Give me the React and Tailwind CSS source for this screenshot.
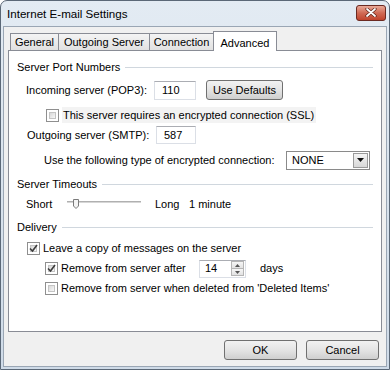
import React from 'react';

const font = { fontFamily: '"Liberation Sans", Arial, sans-serif' };

const Checkbox = ({ checked }) => (
  <div className="w-[13px] h-[13px] border border-[#8f8f8f] bg-white p-[2px] shrink-0">
    <div className="w-full h-full border border-[#c4c4c4] bg-linear-to-br from-[#d8d8d8] to-[#f8f8f8] flex items-center justify-center">
      {checked && (
        <svg width="9" height="9" viewBox="0 0 9 9" className="-m-[2px]">
          <path d="M1 4.5 L3.5 7 L8 1" fill="none" stroke="#3c3c3c" strokeWidth="1.6" />
        </svg>
      )}
    </div>
  </div>
);

const GroupHeader = ({ children }) => (
  <div className="flex items-center h-[16px] gap-[5px] whitespace-nowrap">
    <span>{children}</span>
    <div className="flex-1 h-px bg-[#d0d7de]" />
  </div>
);

const Button = ({ children, className = '' }) => (
  <div
    className={`h-[20px] rounded-[3px] border border-[#707070] flex items-center justify-center shrink-0 bg-linear-to-b from-[#f2f2f2] via-[#e4e4e4] to-[#cfcfcf] ${className}`}
  >
    {children}
  </div>
);

const TextBox = ({ value, className = '' }) => (
  <div
    className={`bg-white border border-[#dbdfe6] border-t-[#abadb3] flex items-center pl-[7px] shrink-0 ${className}`}
  >
    {value}
  </div>
);

const Tab = ({ label, className = '' }) => (
  <div
    className={`h-[17px] border border-b-0 border-[#898c95] bg-linear-to-b from-[#f4f4f4] to-[#e1e1e1] flex items-center justify-center whitespace-nowrap ${className}`}
  >
    {label}
  </div>
);

export default function App() {
  return (
    <div className="w-[392px] h-[372px] bg-white text-[11px] text-black" style={font}>
      <div className="w-[390px] h-[370px] rounded-t-[7px] border border-[#5b6877] bg-linear-to-b from-[#e3ebf3] to-[#cfdbe8] flex flex-col">
        {/* Title bar */}
        <div className="h-[25px] flex items-center justify-between pl-[6px] pr-[3px]">
          <span className="text-[11.6px] mt-[1px]">Internet E-mail Settings</span>
          <div className="w-[30px] h-[16px] mb-[2px] rounded-[3px] border border-[#6b2a22] bg-[#c75a45] bg-linear-to-b from-[#e9a998] via-[#d06a55] to-[#c0432c] flex items-center justify-center">
            <svg width="12" height="9" viewBox="0 0 12 9">
              <path d="M2 1 L10 8 M10 1 L2 8" stroke="#5a2016" strokeWidth="3.2" strokeLinecap="round" />
              <path d="M2 1 L10 8 M10 1 L2 8" stroke="#fff" strokeWidth="1.8" strokeLinecap="round" />
            </svg>
          </div>
        </div>

        {/* Client area */}
        <div className="flex-1 mx-[2px] mb-[2px] border border-[#9aa6b4] bg-[#f0f0f0] pt-[4px] px-[4px] flex flex-col">
          {/* Tabs */}
          <div className="h-[19px] flex items-end pl-[2px]">
            <Tab label="General" className="w-[49px]" />
            <Tab label="Outgoing Server" className="w-[92px] -ml-px" />
            <Tab label="Connection" className="w-[65px] -ml-px" />
            <div className="w-[64px] h-[20px] -ml-px -mb-px relative z-10 border border-b-0 border-[#898c95] bg-white flex items-start justify-center pt-[3px]">
              Advanced
            </div>
          </div>

          {/* Panel */}
          <div className="h-[282px] border border-[#898c95] bg-white px-[8px] pt-[8px] flex flex-col whitespace-nowrap">
            <GroupHeader>Server Port Numbers</GroupHeader>

            <div className="h-[20px] mt-[5px] flex items-center pl-[9px]">
              <span className="w-[128px] shrink-0">Incoming server (POP3):</span>
              <TextBox value="110" className="w-[42px] h-[19px]" />
              <Button className="w-[77px] ml-[10px]">Use Defaults</Button>
            </div>

            <div className="h-[16px] mt-[7px] flex items-center pl-[29px] gap-[3px]">
              <Checkbox />
              <span className="bg-[#f3f3f3] pl-[1px] pr-[2px]">This server requires an encrypted connection (SSL)</span>
            </div>

            <div className="h-[20px] mt-[2px] flex items-center pl-[10px]">
              <span className="w-[129px] shrink-0">Outgoing server (SMTP):</span>
              <TextBox value="587" className="w-[40px] h-[18px]" />
            </div>

            <div className="h-[20px] mt-[5px] flex items-center pl-[27px]">
              <span className="w-[242px] shrink-0">Use the following type of encrypted connection:</span>
              <div className="w-[84px] h-[19px] shrink-0 border border-[#8a8a8a] bg-white flex items-center justify-between pl-[5px] pr-[1px]">
                <span>NONE</span>
                <div className="w-[15px] h-[15px] border border-[#9a9a9a] bg-linear-to-b from-[#f4f4f4] to-[#d8d8d8] flex items-center justify-center">
                  <svg width="7" height="4" viewBox="0 0 7 4">
                    <path d="M0 0 H7 L3.5 4 Z" fill="#111" />
                  </svg>
                </div>
              </div>
            </div>

            <div className="mt-[6px]">
              <GroupHeader>Server Timeouts</GroupHeader>
            </div>

            <div className="h-[20px] mt-[2px] flex items-center pl-[9px]">
              <span className="w-[41px] shrink-0">Short</span>
              <svg width="74" height="12" viewBox="0 0 74 12" className="shrink-0">
                <rect x="0" y="3" width="74" height="2" fill="#d6d6d6" />
                <rect x="0" y="3" width="74" height="1" fill="#b0b0b0" />
                <path d="M6.5 1.5 H11.5 V8 L9 10.5 L6.5 8 Z" fill="#f4f4f4" stroke="#7a7a7a" />
              </svg>
              <span className="ml-[14px] w-[34px] shrink-0">Long</span>
              <span>1 minute</span>
            </div>

            <div className="mt-[5px]">
              <GroupHeader>Delivery</GroupHeader>
            </div>

            <div className="h-[16px] mt-[5px] flex items-center pl-[10px] gap-[3px]">
              <Checkbox checked />
              <span>Leave a copy of messages on the server</span>
            </div>

            <div className="h-[19px] mt-[3px] flex items-center pl-[28px]">
              <Checkbox checked />
              <span className="ml-[3px] w-[138px] shrink-0">Remove from server after</span>
              <div className="w-[47px] h-[18px] shrink-0 border border-[#dbdfe6] border-t-[#abadb3] bg-white flex items-center justify-between pl-[5px] pr-px">
                <span>14</span>
                <div className="w-[13px] h-[15px] flex flex-col">
                  <div className="flex-1 border border-[#b5b5b5] bg-linear-to-b from-[#f6f6f6] to-[#e2e2e2] flex items-center justify-center">
                    <svg width="5" height="3" viewBox="0 0 5 3"><path d="M0 3 H5 L2.5 0 Z" fill="#555" /></svg>
                  </div>
                  <div className="flex-1 border border-t-0 border-[#b5b5b5] bg-linear-to-b from-[#f6f6f6] to-[#e2e2e2] flex items-center justify-center">
                    <svg width="5" height="3" viewBox="0 0 5 3"><path d="M0 0 H5 L2.5 3 Z" fill="#555" /></svg>
                  </div>
                </div>
              </div>
              <span className="ml-[14px]">days</span>
            </div>

            <div className="h-[16px] mt-[2px] flex items-center pl-[28px] gap-[3px]">
              <Checkbox />
              <span>Remove from server when deleted from 'Deleted Items'</span>
            </div>
          </div>

          {/* Buttons */}
          <div className="mt-[8px] flex justify-end gap-[9px] pr-[3px]">
            <Button className="w-[73px]">OK</Button>
            <Button className="w-[73px]">Cancel</Button>
          </div>
        </div>
      </div>
    </div>
  );
}
